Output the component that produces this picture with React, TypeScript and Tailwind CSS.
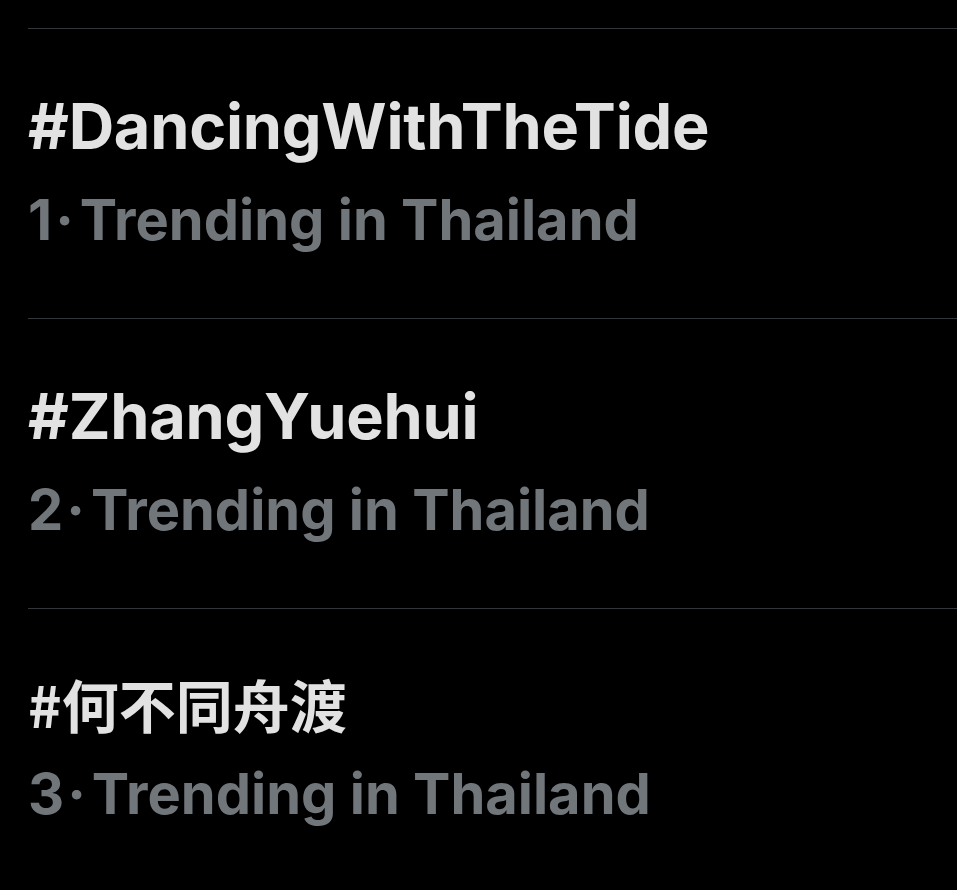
const trends = [
  { rank: 1, tag: "#DancingWithTheTide", cjk: false },
  { rank: 2, tag: "#ZhangYuehui", cjk: false },
  { rank: 3, tag: "#何不同舟渡", cjk: true },
];

export default function App() {
  return (
    <div className="min-h-[890px] w-full bg-black pt-[28px] pl-[28px]" style={{ fontFamily: "Inter, 'Noto Sans', sans-serif" }}>
      {trends.map((t) => (
        <div key={t.rank} className="h-[290px] border-t border-[#333639]">
          <div
            className={
              t.cjk
                ? "mt-[66px] text-[57px] font-bold leading-none text-[#e2e2e2] [font-family:'Noto_Sans_CJK_SC',sans-serif]"
                : "mt-[66px] text-[63px] font-bold leading-none tracking-[-0.004em] text-[#e2e2e2]"
            }
          >
            {t.tag}
          </div>
          <div className="mt-[34px] text-[56px] font-bold leading-none text-[#71767b]">
            {t.rank}
            <span className="ml-[3px] mr-[6px]">·</span>
            Trending in Thailand
          </div>
        </div>
      ))}
    </div>
  );
}
